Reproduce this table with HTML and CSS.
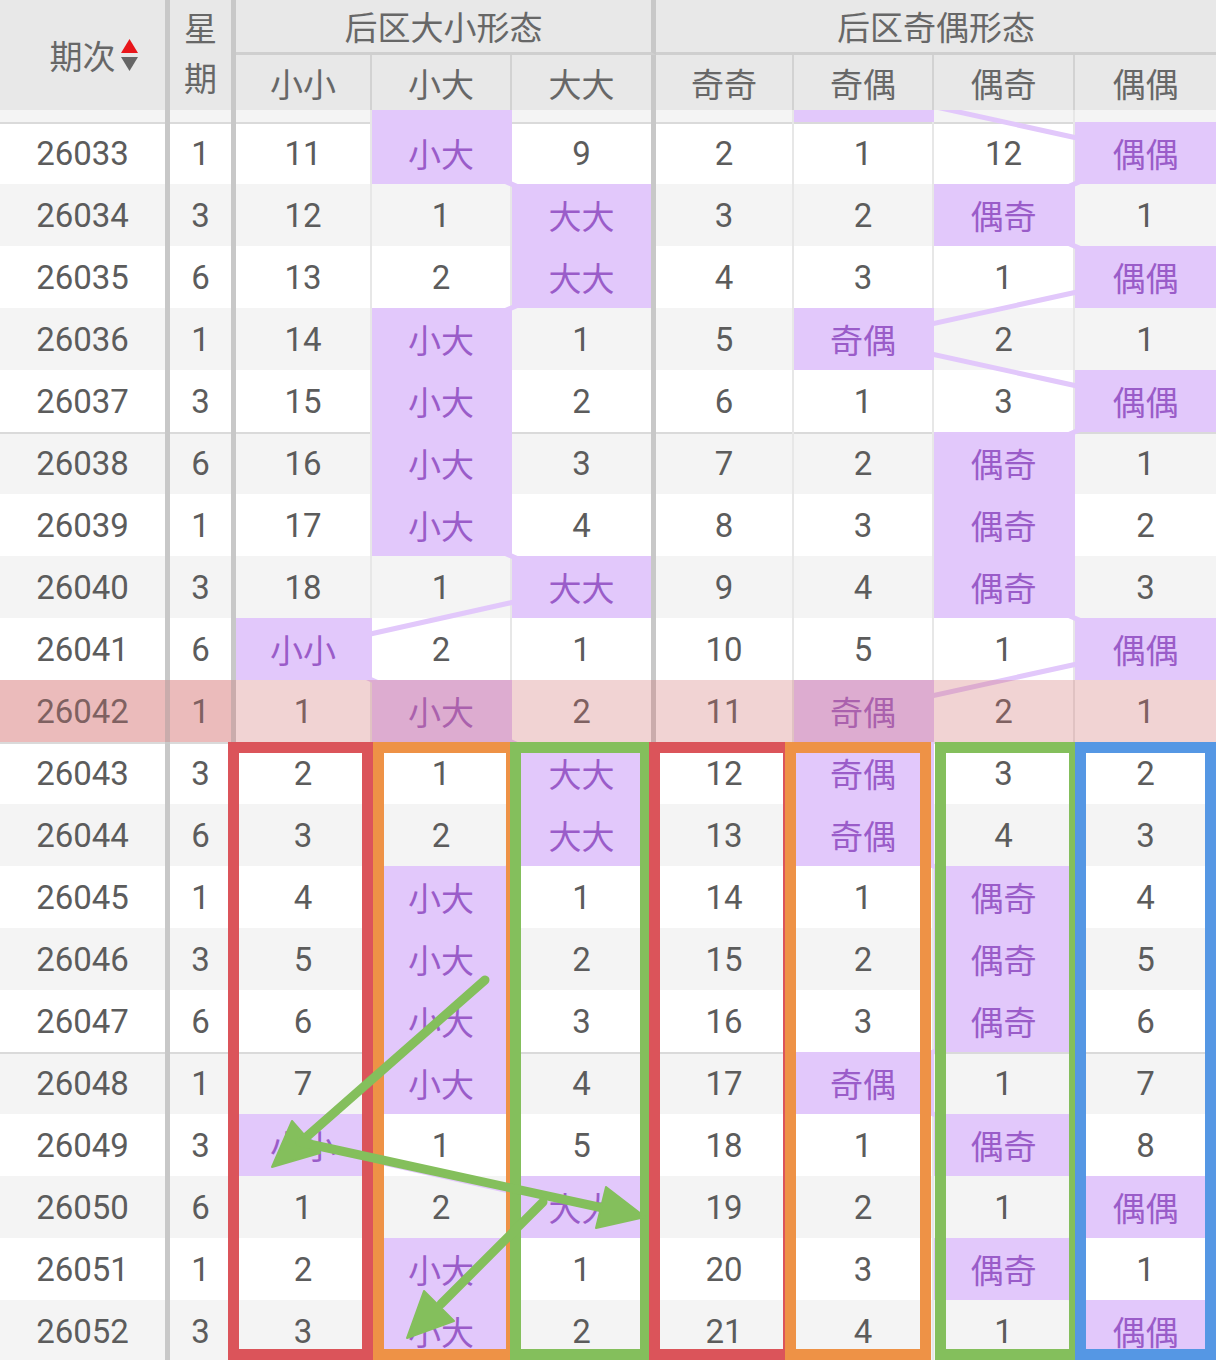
FILE: index.html
```html
<!DOCTYPE html>
<html lang="zh-CN">
<head>
<meta charset="utf-8">
<title>后区形态走势</title>
<link rel="stylesheet" href="styles.css">
</head>
<body>
<div class="page">
  <div class="head">
    <div class="h h-id"><span class="h-id-text">期次<svg class="sort" width="17" height="32" viewBox="0 0 17 32"><polygon points="8.5,0 17,14 0,14" fill="#e8161b"/><polygon points="0,18 17,18 8.5,32" fill="#666"/></svg></span></div>
    <div class="h h-wk">星期</div>
    <div class="h h-g1">后区大小形态</div>
    <div class="h h-g2">后区奇偶形态</div>
    <div class="h h-s">小小</div>
    <div class="h h-s">小大</div>
    <div class="h h-s h-thick">大大</div>
    <div class="h h-s">奇奇</div>
    <div class="h h-s">奇偶</div>
    <div class="h h-s">偶奇</div>
    <div class="h h-s h-last">偶偶</div>
  </div>
  <div class="body">
    <div class="inner">
      <svg class="trend" width="1216" height="1302" viewBox="0 0 1216 1302">
        <polyline points="441,31 441,93 581.5,155 581.5,217 441,279 441,341 441,403 441,465 581.5,527 303,589 441,651 581.5,713 581.5,775 441,837 441,899 441,961 441,1023 303,1085 581.5,1147 441,1209 441,1271"/>
        <polyline points="863,31 1145.5,93 1003.5,155 1145.5,217 863,279 1145.5,341 1003.5,403 1003.5,465 1003.5,527 1145.5,589 863,651 863,713 863,775 1003.5,837 1003.5,899 1003.5,961 863,1023 1003.5,1085 1145.5,1147 1003.5,1209 1145.5,1271"/>
      </svg>

      <div class="row alt"><div class="c"></div><div class="c"></div><div class="c"></div><div class="c p"></div><div class="c"></div><div class="c"></div><div class="c p"></div><div class="c"></div><div class="c"></div></div>
      <div class="row grp"><div class="c">26033</div><div class="c">1</div><div class="c">11</div><div class="c p">小大</div><div class="c">9</div><div class="c">2</div><div class="c">1</div><div class="c">12</div><div class="c p">偶偶</div></div>
      <div class="row alt"><div class="c">26034</div><div class="c">3</div><div class="c">12</div><div class="c">1</div><div class="c p">大大</div><div class="c">3</div><div class="c">2</div><div class="c p">偶奇</div><div class="c">1</div></div>
      <div class="row"><div class="c">26035</div><div class="c">6</div><div class="c">13</div><div class="c">2</div><div class="c p">大大</div><div class="c">4</div><div class="c">3</div><div class="c">1</div><div class="c p">偶偶</div></div>
      <div class="row alt"><div class="c">26036</div><div class="c">1</div><div class="c">14</div><div class="c p">小大</div><div class="c">1</div><div class="c">5</div><div class="c p">奇偶</div><div class="c">2</div><div class="c">1</div></div>
      <div class="row"><div class="c">26037</div><div class="c">3</div><div class="c">15</div><div class="c p">小大</div><div class="c">2</div><div class="c">6</div><div class="c">1</div><div class="c">3</div><div class="c p">偶偶</div></div>
      <div class="row alt grp"><div class="c">26038</div><div class="c">6</div><div class="c">16</div><div class="c p">小大</div><div class="c">3</div><div class="c">7</div><div class="c">2</div><div class="c p">偶奇</div><div class="c">1</div></div>
      <div class="row"><div class="c">26039</div><div class="c">1</div><div class="c">17</div><div class="c p">小大</div><div class="c">4</div><div class="c">8</div><div class="c">3</div><div class="c p">偶奇</div><div class="c">2</div></div>
      <div class="row alt"><div class="c">26040</div><div class="c">3</div><div class="c">18</div><div class="c">1</div><div class="c p">大大</div><div class="c">9</div><div class="c">4</div><div class="c p">偶奇</div><div class="c">3</div></div>
      <div class="row"><div class="c">26041</div><div class="c">6</div><div class="c p">小小</div><div class="c">2</div><div class="c">1</div><div class="c">10</div><div class="c">5</div><div class="c">1</div><div class="c p">偶偶</div></div>
      <div class="row hl"><div class="c">26042</div><div class="c">1</div><div class="c">1</div><div class="c p">小大</div><div class="c">2</div><div class="c">11</div><div class="c p">奇偶</div><div class="c">2</div><div class="c">1</div></div>
      <div class="row grp"><div class="c">26043</div><div class="c">3</div><div class="c">2</div><div class="c">1</div><div class="c p">大大</div><div class="c">12</div><div class="c p">奇偶</div><div class="c">3</div><div class="c">2</div></div>
      <div class="row alt"><div class="c">26044</div><div class="c">6</div><div class="c">3</div><div class="c">2</div><div class="c p">大大</div><div class="c">13</div><div class="c p">奇偶</div><div class="c">4</div><div class="c">3</div></div>
      <div class="row"><div class="c">26045</div><div class="c">1</div><div class="c">4</div><div class="c p">小大</div><div class="c">1</div><div class="c">14</div><div class="c">1</div><div class="c p">偶奇</div><div class="c">4</div></div>
      <div class="row alt"><div class="c">26046</div><div class="c">3</div><div class="c">5</div><div class="c p">小大</div><div class="c">2</div><div class="c">15</div><div class="c">2</div><div class="c p">偶奇</div><div class="c">5</div></div>
      <div class="row"><div class="c">26047</div><div class="c">6</div><div class="c">6</div><div class="c p">小大</div><div class="c">3</div><div class="c">16</div><div class="c">3</div><div class="c p">偶奇</div><div class="c">6</div></div>
      <div class="row alt grp"><div class="c">26048</div><div class="c">1</div><div class="c">7</div><div class="c p">小大</div><div class="c">4</div><div class="c">17</div><div class="c p">奇偶</div><div class="c">1</div><div class="c">7</div></div>
      <div class="row"><div class="c">26049</div><div class="c">3</div><div class="c p">小小</div><div class="c">1</div><div class="c">5</div><div class="c">18</div><div class="c">1</div><div class="c p">偶奇</div><div class="c">8</div></div>
      <div class="row alt"><div class="c">26050</div><div class="c">6</div><div class="c">1</div><div class="c">2</div><div class="c p">大大</div><div class="c">19</div><div class="c">2</div><div class="c">1</div><div class="c p">偶偶</div></div>
      <div class="row"><div class="c">26051</div><div class="c">1</div><div class="c">2</div><div class="c p">小大</div><div class="c">1</div><div class="c">20</div><div class="c">3</div><div class="c p">偶奇</div><div class="c">1</div></div>
      <div class="row alt"><div class="c">26052</div><div class="c">3</div><div class="c">3</div><div class="c p">小大</div><div class="c">2</div><div class="c">21</div><div class="c">4</div><div class="c">1</div><div class="c p">偶偶</div></div>

      <div class="box red box-r1"></div>
      <div class="box orange box-o1"></div>
      <div class="box green box-g1"></div>
      <div class="box red box-r2"></div>
      <div class="box orange box-o2"></div>
      <div class="box green box-g2"></div>
      <div class="box blue box-b"></div>
    </div>
  </div>
  <svg class="arrows" width="1216" height="1360" viewBox="0 0 1216 1360">
    <line x1="485" y1="980" x2="303" y2="1140"/>
    <polygon points="272,1167 292,1121 320,1153"/>
    <line x1="300" y1="1142" x2="603" y2="1208"/>
    <polygon points="645,1217 596,1228 606,1187"/>
    <line x1="543" y1="1202" x2="441" y2="1304"/>
    <polygon points="407,1338 424,1291 454,1321"/>
  </svg>
</div>
</body>
</html>
```
FILE: styles.css
```css
* { box-sizing: border-box; }

html, body {
  margin: 0;
  padding: 0;
  background: #fff;
}

body {
  font-family: Roboto, "Noto Sans CJK SC", sans-serif;
}

.page {
  position: relative;
  width: 1216px;
  height: 1360px;
  overflow: hidden;
}

/* ---------- header ---------- */
.head {
  position: relative;
  z-index: 10;
  display: grid;
  grid-template-columns: 170px 66px 136px 140px 144px 138px 140px 141px 141px;
  grid-template-rows: 55px 55px;
  background: #e8e8e8;
  color: #676767;
  font-size: 33px;
}

.h {
  display: flex;
  align-items: center;
  justify-content: center;
  text-align: center;
}

.h-id {
  grid-row: 1 / 3;
  grid-column: 1;
  border-right: 5px solid #c8c8c8;
}

.h-id-text {
  position: relative;
}

.sort {
  position: absolute;
  left: calc(100% + 5px);
  top: 50%;
  transform: translateY(-50%);
}

.h-wk {
  grid-row: 1 / 3;
  grid-column: 2;
  border-right: 5px solid #c8c8c8;
  line-height: 50px;
}

.h-g1 {
  grid-row: 1;
  grid-column: 3 / 6;
  border-right: 5px solid #c8c8c8;
  border-bottom: 3px solid #cfcfcf;
}

.h-g2 {
  grid-row: 1;
  grid-column: 6 / 10;
  border-bottom: 3px solid #cfcfcf;
}

.h-s {
  grid-row: 2;
  border-right: 2px solid #d2d2d2;
}

.h-thick {
  border-right: 5px solid #c8c8c8;
}

.h-last {
  border-right: 0;
}

/* ---------- body ---------- */
.body {
  height: 1250px;
  overflow: hidden;
}

.inner {
  position: relative;
  z-index: 0;
  margin-top: -50px;
  font-size: 33px;
  color: #5c5c5c;
}

.row {
  display: grid;
  grid-template-columns: 170px 66px 136px 140px 144px 138px 140px 141px 141px;
  height: 62px;
  background: #fff;
}

.row.alt { background: #f4f4f4; }

.row.grp { box-shadow: inset 0 2px 0 #dadada; }

.c {
  display: flex;
  align-items: center;
  justify-content: center;
  border-right: 2px solid #e7e7e7;
}

.c:nth-child(1),
.c:nth-child(2),
.c:nth-child(5) {
  border-right: 5px solid #c8c8c8;
}

.c:nth-child(9) { border-right: 0; }

.p {
  position: relative;
  z-index: 2;
  background: #e2c8fb;
  color: #9a5cc9;
}

.p:not(:nth-child(5)) { border-right-color: transparent; }

/* highlighted row */
.row.hl { position: relative; }

.row.hl .c:nth-child(1),
.row.hl .c:nth-child(2) {
  background: #f7dddd;
}

.row.hl::after {
  content: "";
  position: absolute;
  left: 0;
  top: 0;
  right: 0;
  bottom: 0;
  z-index: 3;
  background: rgba(210, 110, 110, 0.3);
}

/* trend lines */
.trend {
  position: absolute;
  left: 0;
  top: 0;
  z-index: 1;
}

.trend polyline {
  fill: none;
  stroke: #e2c8fb;
  stroke-width: 5;
  stroke-linejoin: round;
}

/* marker boxes */
.box {
  position: absolute;
  z-index: 4;
  top: 682px;
  height: 618px;
  border: 11px solid;
}

.red { border-color: #db545a; }
.orange { border-color: #ee9246; }
.green { border-color: #84bf5c; }
.blue { border-color: #5597e4; }

.box-r1 { left: 228px; width: 145px; }
.box-o1 { left: 373px; width: 144px; }
.box-g1 { left: 510px; width: 141px; }
.box-r2 { left: 649px; width: 145px; }
.box-o2 { left: 785px; width: 146px; }
.box-g2 { left: 935px; width: 145px; }
.box-b  { left: 1075px; width: 141px; }

/* arrows */
.arrows {
  position: absolute;
  left: 0;
  top: 0;
  z-index: 20;
}

.arrows line {
  stroke: #84bf5c;
  stroke-width: 9;
  stroke-linecap: round;
}

.arrows polygon {
  fill: #84bf5c;
  stroke: #84bf5c;
  stroke-width: 2;
  stroke-linejoin: round;
}
```
